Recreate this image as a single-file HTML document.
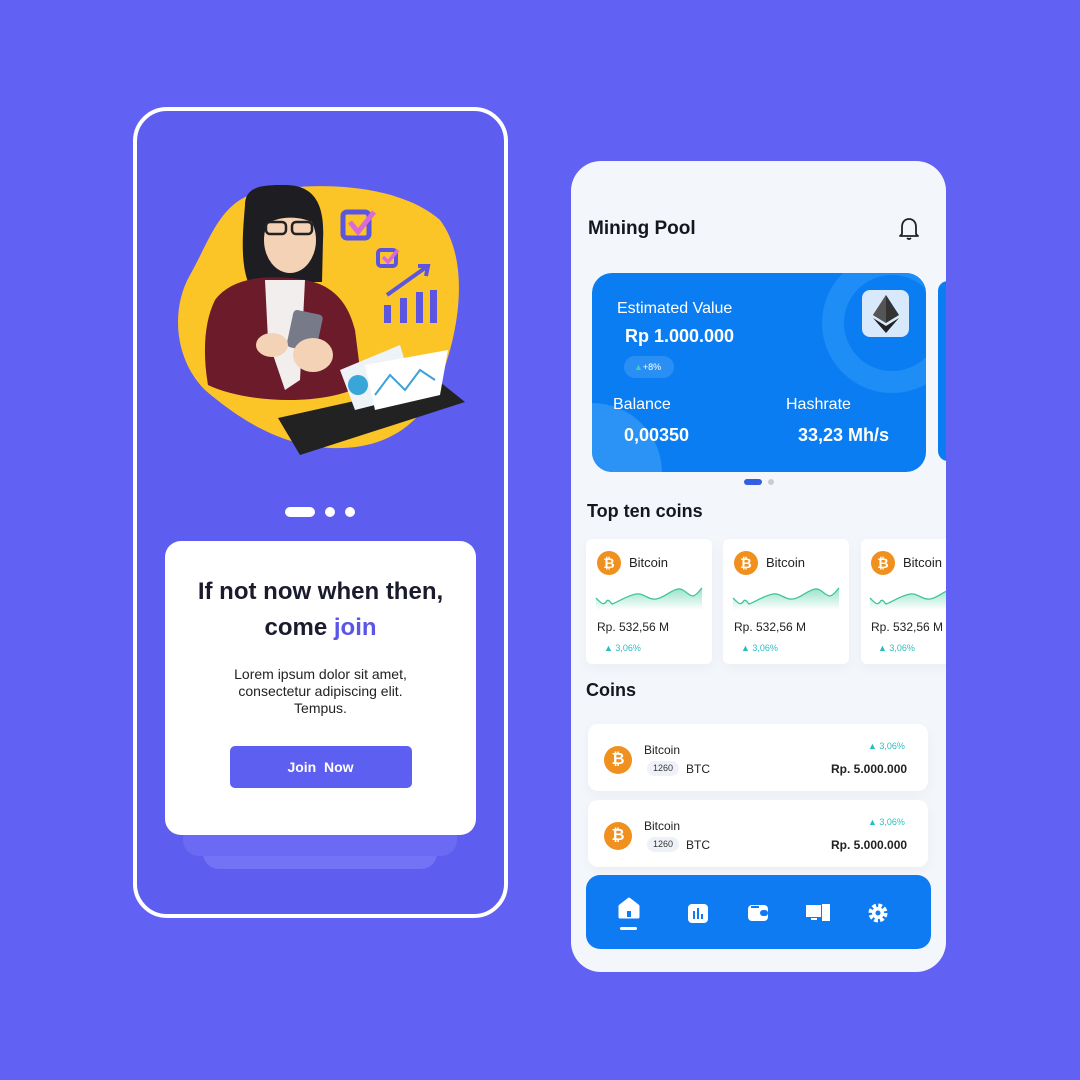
<!DOCTYPE html>
<html><head><meta charset="utf-8"><style>
*{margin:0;padding:0;box-sizing:border-box}
body{width:1080px;height:1080px;background:#6161f3;font-family:"Liberation Sans",sans-serif;position:relative;overflow:hidden}
.a{position:absolute}
.lp{left:133px;top:107px;width:375px;height:811px;border:4px solid #fff;border-radius:34px;background:#5d5df0}
.rp{left:571px;top:161px;width:375px;height:811px;border-radius:30px;background:#f3f6fb;overflow:hidden}
.b{font-weight:bold}
.mini{background:#fff;border-radius:6px;width:126px;height:125px;top:378px;box-shadow:0 4px 12px rgba(0,0,0,.04)}
.btc{width:24px;height:24px;border-radius:50%;background:#f0901e;color:#fff;font-weight:bold;font-size:14px;text-align:center;line-height:24px}
.row{left:17px;width:340px;height:67px;background:#fff;border-radius:10px;box-shadow:0 4px 12px rgba(0,0,0,.04)}
</style></head><body>
<div class="a lp"></div>
<svg class="a" style="left:0;top:0" width="1080" height="1080">
<path d="M260 192 C320 180 400 185 440 220 C470 260 460 330 440 380 C420 430 380 450 330 448 C280 445 240 420 205 390 C175 360 170 310 190 275 C210 240 220 200 260 192Z" fill="#fbc427"/>
<path d="M245 205 C245 185 265 185 285 185 C315 185 325 205 323 240 L322 282 L248 282 C240 260 243 230 245 205Z" fill="#1e1e22"/>
<ellipse cx="290" cy="240" rx="26" ry="33" fill="#f4d2b5"/>
<path d="M262 200 C275 190 310 192 320 210 L318 225 C300 215 280 215 262 226Z" fill="#1e1e22"/>
<rect x="266" y="222" width="20" height="12" rx="4" fill="none" stroke="#222" stroke-width="2.5"/><rect x="292" y="222" width="20" height="12" rx="4" fill="none" stroke="#222" stroke-width="2.5"/>
<path d="M215 300 C230 280 260 275 290 278 C320 280 345 290 355 330 L362 385 C330 405 250 405 208 385 C202 350 205 320 215 300Z" fill="#6c1b2a"/>
<path d="M265 280 L305 280 L300 380 L285 390 L268 340Z" fill="#f2eeee"/>
<rect x="290" y="312" width="30" height="38" rx="4" fill="#777a88" transform="rotate(12 305 330)"/>
<ellipse cx="313" cy="355" rx="20" ry="17" fill="#f4d2b5"/><ellipse cx="272" cy="345" rx="16" ry="12" fill="#f4d2b5"/>
<path d="M278 418 L440 382 L465 402 L300 455Z" fill="#222"/>
<path d="M340 370 L400 345 L415 395 L355 410Z" fill="#eef3f8"/>
<path d="M365 365 L448 350 L440 395 L375 410Z" fill="#fff"/>
<path d="M375 395 L390 375 L405 390 L420 370 L435 380" fill="none" stroke="#3fa0d8" stroke-width="2"/>
<circle cx="358" cy="385" r="10" fill="#38a6d8"/>
<rect x="343" y="212" width="26" height="26" rx="4" fill="none" stroke="#5b55e0" stroke-width="5"/>
<path d="M350 222 L358 232 L374 212" stroke="#d96ad8" stroke-width="5" fill="none"/>
<rect x="378" y="250" width="18" height="16" rx="3" fill="none" stroke="#5b55e0" stroke-width="4"/>
<path d="M383 257 L388 262 L398 250" stroke="#d96ad8" stroke-width="3.5" fill="none"/>
<path d="M387 295 L425 268" stroke="#5b55e0" stroke-width="4"/><path d="M418 266 L428 266 L426 276" stroke="#5b55e0" stroke-width="4" fill="none"/>
<rect x="384" y="305" width="7" height="18" fill="#5b55e0"/><rect x="400" y="298" width="7" height="25" fill="#5b55e0"/><rect x="416" y="292" width="7" height="31" fill="#5b55e0"/><rect x="430" y="290" width="7" height="33" fill="#5b55e0"/>
</svg>
<div class="a" style="left:285px;top:507px;width:30px;height:10px;border-radius:5px;background:#fff"></div>
<div class="a" style="left:325px;top:507px;width:10px;height:10px;border-radius:50%;background:#fff"></div>
<div class="a" style="left:345px;top:507px;width:10px;height:10px;border-radius:50%;background:#fff"></div>
<div class="a" style="left:203px;top:840px;width:234px;height:29px;border-radius:0 0 16px 16px;background:#7373f6"></div>
<div class="a" style="left:183px;top:820px;width:274px;height:36px;border-radius:0 0 16px 16px;background:#6a6af5"></div>
<div class="a" style="left:165px;top:541px;width:311px;height:294px;border-radius:16px;background:#fff;text-align:center">
<div class="b" style="margin-top:33px;font-size:24px;line-height:36px;color:#1b1b2e">If not now when then,<br>come <span style="color:#5b55e8">join</span></div>
<div style="margin-top:20px;font-size:14px;line-height:17px;color:#222">Lorem ipsum dolor sit amet,<br>consectetur adipiscing elit.<br>Tempus.</div>
<div class="b" style="margin:29px auto 0;width:182px;height:42px;border-radius:5px;background:#5d5ff0;color:#fff;font-size:14px;line-height:42px">Join&nbsp; Now</div>
</div>

<div class="a rp">
<div class="a b" style="left:17px;top:57px;font-size:19px;color:#16161e">Mining Pool</div>
<svg class="a" style="left:327px;top:56px" width="22" height="24" viewBox="0 0 22 24"><path d="M4 17 L4 10 C4 5 7 2 11 2 C15 2 18 5 18 10 L18 17 L20 19 L2 19 Z" fill="none" stroke="#222" stroke-width="1.8" stroke-linejoin="round"/><path d="M9 21 Q11 23 13 21" stroke="#222" stroke-width="1.8" fill="none"/></svg>
<div class="a" style="left:21px;top:112px;width:334px;height:199px;border-radius:20px;background:#0a7df2;overflow:hidden;color:#fff">
<div class="a" style="left:230px;top:-20px;width:140px;height:140px;border-radius:50%;border:22px solid #1e8df5"></div>
<div class="a" style="left:-70px;top:130px;width:140px;height:140px;border-radius:50%;background:#2a93f5"></div>
<div class="a" style="left:270px;top:17px;width:47px;height:47px;border-radius:8px;background:#d7e9fb"></div>
<svg class="a" style="left:281px;top:22px" width="26" height="38" viewBox="0 0 26 38"><path d="M13 0 L26 20 L13 28 L0 20Z" fill="#333"/><path d="M13 0 L13 28 L0 20Z" fill="#555"/><path d="M0 23 L13 31 L26 23 L13 38Z" fill="#222"/></svg>
<div class="a" style="left:25px;top:27px;font-size:16px">Estimated Value</div>
<div class="a b" style="left:33px;top:53px;font-size:18px">Rp 1.000.000</div>
<div class="a" style="left:32px;top:83px;width:50px;height:22px;border-radius:11px;background:#2a8ff5;font-size:9px;line-height:22px;padding-left:10px"><span style="color:#3fd0b0">▲</span>+8%</div>
<div class="a" style="left:21px;top:123px;font-size:16px">Balance</div>
<div class="a" style="left:194px;top:123px;font-size:16px">Hashrate</div>
<div class="a b" style="left:32px;top:152px;font-size:18px">0,00350</div>
<div class="a b" style="left:206px;top:152px;font-size:18px">33,23 Mh/s</div>
</div>
<div class="a" style="left:367px;top:120px;width:20px;height:180px;border-radius:10px;background:#0a7df2"></div>
<div class="a" style="left:173px;top:318px;width:18px;height:6px;border-radius:3px;background:#3260e0"></div>
<div class="a" style="left:197px;top:318px;width:6px;height:6px;border-radius:50%;background:#ccc"></div>
<div class="a b" style="left:16px;top:340px;font-size:18px;color:#16161e">Top ten coins</div>
<div class="a mini" style="left:15px"></div><div class="a mini" style="left:152px"></div><div class="a mini" style="left:290px"></div>
<div class="a" style="left:0;top:0">
<div class="a btc" style="left:26px;top:390px">₿</div><div class="a" style="left:58px;top:394px;font-size:13px;color:#222">Bitcoin</div>
<div class="a btc" style="left:163px;top:390px">₿</div><div class="a" style="left:195px;top:394px;font-size:13px;color:#222">Bitcoin</div>
<div class="a btc" style="left:300px;top:390px">₿</div><div class="a" style="left:332px;top:394px;font-size:13px;color:#222">Bitcoin</div>
</div>
<svg class="a" style="left:0;top:0" width="375" height="811">
<defs><linearGradient id="g" x1="0" y1="0" x2="0" y2="1"><stop offset="0" stop-color="#52d0a4" stop-opacity=".6"/><stop offset="1" stop-color="#52d0a4" stop-opacity="0"/></linearGradient>
<g id="sp"><path d="M0 12 C4 16 7 20 10 16 C12 12 14 16 16 18 C22 16 30 10 40 8 C48 7 52 14 60 13 C68 12 75 4 82 3 C88 2 92 10 97 10 C101 9 103 5 106 2 L106 24 L0 24Z" fill="url(#g)"/><path d="M0 12 C4 16 7 20 10 16 C12 12 14 16 16 18 C22 16 30 10 40 8 C48 7 52 14 60 13 C68 12 75 4 82 3 C88 2 92 10 97 10 C101 9 103 5 106 2" fill="none" stroke="#3fc49a" stroke-width="1.3"/></g></defs>
<use href="#sp" x="25" y="585" transform="translate(0 -160)"/><use href="#sp" x="162" y="425"/><use href="#sp" x="299" y="425"/>
<use href="#sp" x="148" y="584"/><use href="#sp" x="148" y="660"/>
</svg>
<div class="a" style="left:26px;top:459px;font-size:12px;color:#222">Rp. 532,56 M</div>
<div class="a" style="left:163px;top:459px;font-size:12px;color:#222">Rp. 532,56 M</div>
<div class="a" style="left:300px;top:459px;font-size:12px;color:#222">Rp. 532,56 M</div>
<div class="a" style="left:33px;top:482px;font-size:9px;color:#2bbcc0">▲ 3,06%</div>
<div class="a" style="left:170px;top:482px;font-size:9px;color:#2bbcc0">▲ 3,06%</div>
<div class="a" style="left:307px;top:482px;font-size:9px;color:#2bbcc0">▲ 3,06%</div>
<div class="a b" style="left:15px;top:519px;font-size:18px;color:#16161e">Coins</div>
<div class="a row" style="top:563px"></div><div class="a row" style="top:639px"></div>
<div class="a btc" style="left:33px;top:585px;width:28px;height:28px;line-height:28px;font-size:16px">₿</div>
<div class="a btc" style="left:33px;top:661px;width:28px;height:28px;line-height:28px;font-size:16px">₿</div>
<div class="a" style="left:73px;top:582px;font-size:12px;color:#222">Bitcoin</div>
<div class="a" style="left:73px;top:658px;font-size:12px;color:#222">Bitcoin</div>
<div class="a" style="left:76px;top:600px;width:32px;height:15px;border-radius:8px;background:#eef2f8;font-size:9px;line-height:15px;text-align:center;color:#333">1260</div>
<div class="a" style="left:76px;top:676px;width:32px;height:15px;border-radius:8px;background:#eef2f8;font-size:9px;line-height:15px;text-align:center;color:#333">1260</div>
<div class="a" style="left:115px;top:601px;font-size:12px;color:#222">BTC</div>
<div class="a" style="left:115px;top:677px;font-size:12px;color:#222">BTC</div>
<div class="a" style="left:297px;top:580px;font-size:9px;color:#2bbcc0">▲ 3,06%</div>
<div class="a" style="left:297px;top:656px;font-size:9px;color:#2bbcc0">▲ 3,06%</div>
<div class="a" style="left:260px;top:601px;font-size:12px;color:#222;font-weight:bold">Rp. 5.000.000</div>
<div class="a" style="left:260px;top:677px;font-size:12px;color:#222;font-weight:bold">Rp. 5.000.000</div>
<div class="a" style="left:15px;top:714px;width:345px;height:74px;border-radius:14px;background:#0f7bf2"></div>
<svg class="a" style="left:15px;top:714px" width="345" height="74">
<path d="M43 24 L52 31 L52 42 L34 42 L34 31Z" fill="#fff" stroke="#fff" stroke-width="3" stroke-linejoin="round"/><rect x="41" y="36" width="4" height="6" fill="#0f7bf2"/>
<rect x="34" y="52" width="17" height="3" rx="1.5" fill="#fff"/>
<rect x="102" y="29" width="20" height="19" rx="4" fill="#fff"/><rect x="107" y="36" width="2" height="8" fill="#0f7bf2"/><rect x="111" y="33" width="2" height="11" fill="#0f7bf2"/><rect x="115" y="39" width="2" height="5" fill="#0f7bf2"/>
<rect x="162" y="30" width="20" height="16" rx="4" fill="#fff"/><rect x="174" y="35" width="8" height="6" rx="3" fill="#0f7bf2"/><rect x="165" y="31" width="8" height="2" fill="#0f7bf2"/>
<rect x="220" y="30" width="15" height="12" fill="#fff"/><rect x="225" y="43" width="6" height="2" fill="#fff"/><rect x="236" y="29" width="8" height="17" fill="#fff"/>
<circle cx="292" cy="38" r="7" fill="none" stroke="#fff" stroke-width="5" stroke-dasharray="3.5 2"/><circle cx="292" cy="38" r="6" fill="#fff"/><circle cx="292" cy="38" r="2.5" fill="#0f7bf2"/>
</svg>
</div>
</body></html>
